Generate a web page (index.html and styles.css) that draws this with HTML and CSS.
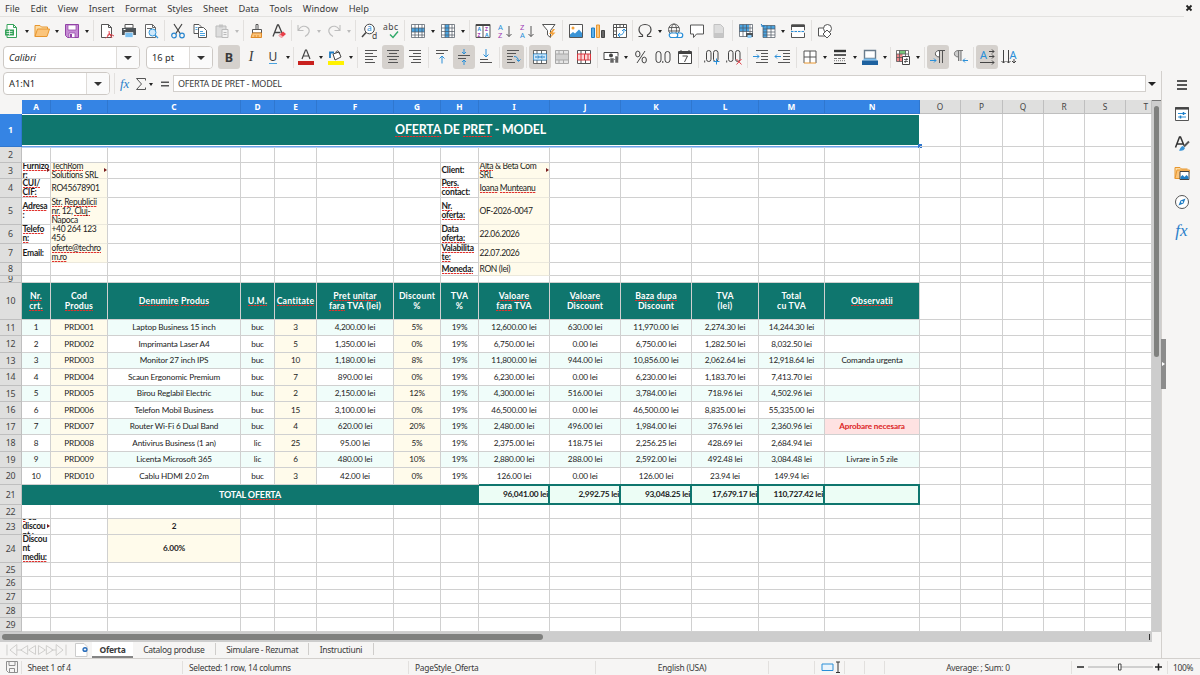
FILE: index.html
```html
<!DOCTYPE html>
<html lang="ro">
<head>
    <meta charset="UTF-8">
    <meta name="viewport" content="width=device-width, initial-scale=1.0">
    <title>Oferta de pret</title>
    <link rel="stylesheet" href="styles.css">
</head>
<body>
    <div class="window">
        <div class="menubar">
            <span>File</span><span>Edit</span><span>View</span><span>Insert</span><span>Format</span><span>Styles</span><span>Sheet</span><span>Data</span><span>Tools</span><span>Window</span><span>Help</span>
            <svg class="close" viewBox="0 0 8 8"><path d="M1.5 1.5l5 5M6.5 1.5l-5 5" stroke="#222" stroke-width="1.8"/></svg>
        </div>

        <!-- Standard toolbar -->
        <div class="toolbar">
            <button class="btn"><svg viewBox="0 0 16 16"><path d="M3 1.5h6.5l3 3v10H3z" fill="#fff" stroke="#37a35b"/><path d="M9.5 1.5v3h3" stroke="#37a35b"/><path d="M1 6.5h9v6H1z" fill="#37a35b"/><path d="M2.5 8.5h6M2.5 10.5h6M5.5 7v5" stroke="#fff" stroke-width=".7"/></svg></button><i class="drop"></i>
            <button class="btn"><svg viewBox="0 0 16 16"><path d="M1 13.5v-11h5l1.500 1.500h6v2" fill="#fcdca4" stroke="#e8962e"/><path d="M1 13.500l2.500-7.500H15.500l-2.500 7.500z" fill="#fbc57c" stroke="#e8962e"/></svg></button><i class="drop"></i>
            <button class="btn"><svg viewBox="0 0 16 16"><path d="M1.500 1.500h13v13h-11l-2-2z" fill="#c58ad3" stroke="#9242a6"/><path d="M4 2h8v5H4zM5 10h6v4.500H5z" fill="#fff" stroke="#9242a6" stroke-width=".7"/><path d="M6 11h2v3H6z" fill="#9242a6"/></svg></button><i class="drop"></i>
            <i class="sep"></i>
            <button class="btn"><svg viewBox="0 0 16 16"><path d="M2.500 1.500h7l3 3v10h-10z" fill="#fff" stroke="#555"/><path d="M9.500 1.500v3h3" stroke="#555"/><path d="M6.500 15c4-2 4-4 3.500-7M8 12.500c2-1.500 4-1.500 7 .5M10 10l3 5" stroke="#e0424c"/></svg></button>
            <button class="btn"><svg viewBox="0 0 16 16"><path d="M4 1.500h8V5H4z" fill="#fff" stroke="#555"/><path d="M1 5h14v7H1z" fill="#4d5357"/><path d="M4 9.500h8v5H4z" fill="#7cc0f0" stroke="#fff" stroke-width=".6"/><path d="M2.500 6.500h2" stroke="#fff"/></svg></button>
            <button class="btn"><svg viewBox="0 0 16 16"><path d="M2.500 1.500h7l3 3v10h-10z" fill="#fff" stroke="#666"/><path d="M9.500 1.500v3h3M4 5.500h5" stroke="#666"/><circle cx="9.500" cy="9.500" r="3.500" fill="#cfe8fa" stroke="#3598dc"/><path d="M12 12l3 3" stroke="#3598dc" stroke-width="1.300"/></svg></button>
            <i class="sep"></i>
            <button class="btn"><svg viewBox="0 0 16 16"><path d="M4 1l6.500 10M12 1L5.500 11" stroke="#444" stroke-width="1.200"/><circle cx="4" cy="12.500" r="2.300" stroke="#2a86cf" stroke-width="1.200"/><circle cx="12" cy="12.500" r="2.300" stroke="#2a86cf" stroke-width="1.200"/></svg></button>
            <button class="btn"><svg viewBox="0 0 16 16"><path d="M2 1.500h5l2 2v7H2z" fill="#fff" stroke="#555"/><path d="M6.500 4.500h5l3 3v7h-8z" fill="#fff" stroke="#555"/><path d="M8 8.500h3M8 10.500h5M8 12.500h5M3.500 4.500h2M3.500 6.500h2" stroke="#4aa3df"/></svg></button>
            <button class="btn"><svg viewBox="0 0 16 16"><path d="M2 3h10v11H2z" fill="#ddd" stroke="#bbb"/><path d="M5 1.500h4v3H5z" fill="#c4c4c4"/><path d="M8 6.500h6v8H8z" fill="#f2f2f2" stroke="#bbb"/><path d="M9.500 9.500h3M9.500 11.500h3" stroke="#bbb"/></svg></button><i class="drop off"></i>
            <i class="sep"></i>
            <button class="btn"><svg viewBox="0 0 16 16"><path d="M7 1.500h2v5H7zM3.500 6.500h9V10h-9z" fill="#fff" stroke="#555"/><path d="M3.500 10h9v4.500H2z" fill="#fbc57c" stroke="#e08a28"/><path d="M6 12v2M9 12v2" stroke="#e08a28"/></svg></button>
            <button class="btn"><svg viewBox="0 0 16 16"><path d="M2 13.500L6.500 2h1L11 10M3.500 9.500h6" stroke="#444" stroke-width="1.300"/><path d="M7.500 12.500l4.500-4 3 2.500-4.500 4z" fill="#e8404a"/><path d="M7.500 12.500l1.500-1.300 3 2.600-1.500 1.200z" fill="#f6b3b7"/></svg></button>
            <i class="sep narrow"></i>
            <button class="btn"><svg viewBox="0 0 16 16"><path d="M2 2v5.500h5.500M2.500 7C5 2.500 9 2.500 11.500 4.500c3 2.500 2 6.500-2.500 9" stroke="#bdbdbd" stroke-width="1.100"/></svg></button><i class="drop off"></i>
            <button class="btn"><svg viewBox="0 0 16 16"><path d="M14 2v5.500H8.500M13.500 7C11 2.500 7 2.500 4.500 4.500c-3 2.500-2 6.500 2.500 9" stroke="#bdbdbd" stroke-width="1.100"/></svg></button><i class="drop off"></i>
            <i class="sep"></i>
            <button class="btn"><svg viewBox="0 0 16 16"><circle cx="8.500" cy="6" r="4.800" fill="#fff" stroke="#444"/><path d="M5 9.500L1 14" stroke="#444" stroke-width="1.500"/><text x="6" y="8.300" class="ico-t blue">a</text><text x="11" y="15.500" class="ico-t">d</text></svg></button>
            <button class="btn"><svg viewBox="0 0 16 16"><text x="0" y="7" class="ico-t" textLength="15">abc</text><path d="M7 11.500l3 3 5-6" stroke="#2fa868" stroke-width="1.400"/></svg></button>
            <i class="sep"></i>
            <button class="btn"><svg viewBox="0 0 16 16"><path d="M1.500 1.500h13v13h-13z" fill="#fff"/><path d="M1.500 5h13v4h-13z" fill="#4aa3df"/><path d="M1.500 1.500h13v13h-13zM1.500 5h13M1.500 9h13M1.500 12h13M5 1.500v13M8.500 1.500v13M12 1.500v13" stroke="#4b5560" stroke-width=".7"/></svg></button><i class="drop"></i>
            <button class="btn"><svg viewBox="0 0 16 16"><path d="M1.500 1.500h13v13h-13z" fill="#fff"/><path d="M5 1.500h4v13H5z" fill="#4aa3df"/><path d="M1.500 1.500h13v13h-13zM1.500 5h13M1.500 8.500h13M1.500 12h13M5 1.500v13M9 1.500v13M12 1.500v13" stroke="#4b5560" stroke-width=".7"/></svg></button><i class="drop"></i>
            <i class="sep"></i>
            <button class="btn"><svg viewBox="0 0 16 16"><path d="M1 1.500h14v13H1zM8 2v12" fill="#fff" stroke="#555"/><path d="M1 1.500h14v1.500H1z" fill="#444"/><text x="2.500" y="8" class="ico-s blue">A</text><text x="10" y="8" class="ico-s pur">Z</text><text x="2.500" y="13.700" class="ico-s pur">Z</text><text x="10" y="13.700" class="ico-s blue">A</text></svg></button>
            <button class="btn"><svg viewBox="0 0 16 16"><text x="1" y="6.500" class="ico-m blue">A</text><text x="1" y="15" class="ico-m pur">Z</text><path d="M12 3v10.500M9.500 11l2.500 2.500 2.500-2.500" stroke="#555"/></svg></button>
            <button class="btn"><svg viewBox="0 0 16 16"><text x="1" y="6.500" class="ico-m pur">Z</text><text x="1" y="15" class="ico-m blue">A</text><path d="M12 3v10.500M9.500 11l2.500 2.500 2.500-2.500" stroke="#555"/></svg></button>
            <button class="btn"><svg viewBox="0 0 16 16"><path d="M1.500 1.500h12.500L9.500 7.500v7l-3-2.500V7.500z" fill="#fff" stroke="#555"/><path d="M12 6l-4 5h3l-2 4 5.500-5.500h-3L14 6z" fill="#f3a13a"/></svg></button>
            <i class="sep"></i>
            <button class="btn"><svg viewBox="0 0 16 16"><path d="M1.500 1.500h13v13h-13z" fill="#fff" stroke="#555"/><circle cx="5" cy="5" r="1.500" fill="#f3a13a"/><path d="M2 14v-2.500l3-2.500 2 1.500 4-4 3 3.500v4z" fill="#3a94d6"/></svg></button>
            <button class="btn"><svg viewBox="0 0 16 16"><path d="M1.500 5h3v9.500h-3z" fill="#5cb0ea" stroke="#1f7dc4"/><path d="M6.500 2h3v12.500h-3z" fill="#fbc57c" stroke="#e8962e"/><path d="M11.500 7.500h3v7h-3z" fill="#666" stroke="#444"/></svg></button>
            <button class="btn"><svg viewBox="0 0 16 16"><path d="M1.500 1.500h13v13h-13z" fill="#fff" stroke="#555"/><path d="M1.500 4.500h13M4.500 1.500v13M8 1.500v3M11.500 1.500v3M1.500 8h3M1.500 11.500h3" stroke="#555"/><path d="M7 12c4 0 5-2 5-5.500M6 12l2-2M6 12l2 2M12 6l-2 2M12 6l2 2" stroke="#2a8fd8"/></svg></button>
            <i class="sep narrow"></i>
            <button class="btn"><svg viewBox="0 0 16 16"><path d="M1.500 13.500h4V12C3 10.500 2 8.500 2 6.500 2 3.500 4.500 1.500 8 1.500s6 2 6 5c0 2-1 4-3.500 5.500v1.500h4" stroke="#444" stroke-width="1.200"/></svg></button><i class="drop"></i>
            <button class="btn"><svg viewBox="0 0 16 16"><circle cx="7" cy="6.500" r="5.500" stroke="#555" stroke-width=".9"/><ellipse cx="7" cy="6.500" rx="2.500" ry="5.500" stroke="#555" stroke-width=".9"/><path d="M2 4.500h10M1.500 8h11" stroke="#555" stroke-width=".9"/><path d="M4.500 10h4a2 2 0 010 4.500h-4a2 2 0 010-4.500zM10.500 10h3a2 2 0 010 4.500h-3" fill="#fff" stroke="#2a8fd8" stroke-width="1.200"/></svg></button>
            <button class="btn"><svg viewBox="0 0 16 16"><path d="M1.500 2h13v9H7.500L4.500 14.500V11h-3z" fill="#fff" stroke="#555"/></svg></button>
            <button class="btn"><svg viewBox="0 0 16 16"><path d="M3 1.500h6.500l3 3v10H3z" fill="#ddd" stroke="#c2c2c2"/><path d="M3 10h9.500v4H3z" fill="#c6c6c6"/></svg></button>
            <i class="sep"></i>
            <button class="btn"><svg viewBox="0 0 16 16"><path d="M1.500 1.500h13v12h-13z" fill="#fff"/><path d="M1.500 1.500H11v7H1.500z" fill="#4aa3df"/><path d="M1.500 1.500h13v12h-13zM1.500 5h13M1.500 8.500h13M5 1.500v12M8.500 1.500v12M12 1.500v12" stroke="#4b5560" stroke-width=".7"/><path d="M8 10h7v4H8z" fill="#4d5357"/><path d="M9.500 12h4v3h-4z" fill="#8ecbf5"/></svg></button>
            <button class="btn"><svg viewBox="0 0 16 16"><path d="M3 2.500h12v12H3z" fill="#fff"/><path d="M3 2.500h12v3.500H3zM3 2.500h4v12H3z" fill="#4aa3df"/><path d="M3 2.500h12v12H3zM3 6h12M3 9h12M3 12h12M7 2.500v12M11 2.500v12" stroke="#4b5560" stroke-width=".7"/><path d="M1 1l2.500 3M1 3h4" stroke="#1f7dc4"/></svg></button><i class="drop"></i>
            <button class="btn"><svg viewBox="0 0 16 16"><path d="M1.500 2h13v12.500h-13z" fill="#fff" stroke="#555"/><path d="M1.500 1.500h13V4h-13z" fill="#4b4b4b"/><path d="M0 8.500h16" stroke="#f6f5f4" stroke-width="2.500"/><path d="M1 8.500h14" stroke="#2a8fd8" stroke-dasharray="2.500 1"/></svg></button>
            <i class="sep"></i>
            <button class="btn"><svg viewBox="0 0 16 16"><path d="M1.500 5h7v8h-7z" fill="#fff" stroke="#555"/><circle cx="10.500" cy="5.500" r="4" fill="#fff" stroke="#555"/><path d="M10 7l4 4-4 4-4-4z" fill="#fff" stroke="#555"/></svg></button>
        </div>

        <!-- Formatting toolbar -->
        <div class="toolbar format">
            <div class="combo font-name"><span>Calibri</span><b></b></div>
            <div class="combo font-size"><span>16 pt</span><b></b></div>
            <button class="btn on letter"><strong>B</strong></button>
            <button class="btn letter"><em>I</em></button>
            <button class="btn letter"><u>U</u></button><i class="drop"></i>
            <i class="sep narrow"></i>
            <button class="btn"><svg viewBox="0 0 16 16"><path d="M4 10L7.500 1h1L12 10M5.300 7h5.400" stroke="#444" stroke-width="1.200"/><path d="M0 12h16v4H0z" fill="#c9211e"/></svg></button><i class="drop"></i>
            <button class="btn"><svg viewBox="0 0 16 16"><path d="M5 5l6-2 2 5-6 3z" fill="#fff" stroke="#444"/><path d="M8 4c0-3 3-3 3.500 1" stroke="#444"/><path d="M2 9V3.500h4" stroke="#1f7dc4" stroke-width="1.800"/><path d="M0 12h16v4H0z" fill="#fff200"/></svg></button><i class="drop"></i>
            <i class="sep"></i>
            <button class="btn"><svg viewBox="0 0 16 16"><path d="M2 1.500h12M2 4.500h8M2 7.500h12M2 10.500h8M2 13.500h10" stroke="#555"/></svg></button>
            <button class="btn on"><svg viewBox="0 0 16 16"><path d="M2 1.500h12M4 4.500h8M2 7.500h12M4 10.500h8M3 13.500h10" stroke="#555"/></svg></button>
            <button class="btn"><svg viewBox="0 0 16 16"><path d="M2 1.500h12M6 4.500h8M2 7.500h12M6 10.500h8M4 13.500h10" stroke="#555"/></svg></button>
            <i class="sep"></i>
            <button class="btn"><svg viewBox="0 0 16 16"><path d="M2 1.500h12M2 4.500h8" stroke="#555"/><path d="M8 14.500V7M5.500 9.500L8 7l2.500 2.500" stroke="#2a8fd8"/></svg></button>
            <button class="btn on"><svg viewBox="0 0 16 16"><path d="M2 6.500h12M2 9.500h8" stroke="#555"/><path d="M8 0v5M6 3l2 2 2-2M8 16v-5M6 13l2-2 2 2" stroke="#2a8fd8"/></svg></button>
            <button class="btn"><svg viewBox="0 0 16 16"><path d="M2 10.500h8M2 13.500h12" stroke="#555"/><path d="M8 0v8M5.500 5.500L8 8l2.500-2.500" stroke="#2a8fd8"/></svg></button>
            <i class="sep"></i>
            <button class="btn on"><svg viewBox="0 0 16 16"><path d="M2 1.500h12M2 4.500h9M2 7.500h6M2 10.500h5M2 13.500h8" stroke="#555"/><path d="M9 7.500c3 0 4 1.500 4.500 4.500M11.500 10.500l2 2 2-2" stroke="#2a8fd8"/></svg></button>
            <i class="sep"></i>
            <button class="btn on"><svg viewBox="0 0 16 16"><path d="M1.500 1.500h13v13h-13z" fill="#fff"/><path d="M1.500 1.500h13v13h-13zM1.500 5h13M1.500 11h13M5 1.500V5M9.500 1.500V5M5 11v3.500M9.500 11v3.500" stroke="#444" stroke-width=".8"/><path d="M1.500 5h13v6h-13z" fill="#cfe8fa" stroke="#2a8fd8" stroke-width=".7"/><path d="M3 8h4M9 8h4M6 6.500L7.500 8 6 9.500M10 6.500L8.500 8 10 9.500" stroke="#1f7dc4"/></svg></button>
            <button class="btn"><svg viewBox="0 0 16 16"><path d="M1.500 1.500h13v13h-13z" fill="#e6e6e6"/><path d="M1.500 5h13v6h-13z" fill="#d0d0d0"/><path d="M1.500 1.500h13v13h-13zM1.500 5h13M1.500 11h13M5 1.500V5M9.500 1.500V5M5 11v3.500M9.500 11v3.500" stroke="#a8a8a8"/></svg></button>
            <button class="btn"><svg viewBox="0 0 16 16"><path d="M1.500 1.500h13v13h-13z" fill="#fff"/><path d="M1.500 1.500h13v13h-13zM5 1.500V5M9.500 1.500V5M5 11v3.500M9.500 11v3.500" stroke="#555"/><path d="M1.500 5h13v6h-13zM5 5v6M8.500 5v6M12 5v6" fill="#fbd5d6" stroke="#d9363e"/></svg></button>
            <i class="sep"></i>
            <button class="btn"><svg viewBox="0 0 16 16"><path d="M1 3.500h14v7H1z" fill="#fff" stroke="#444"/><circle cx="8" cy="6.500" r="2" fill="#444"/><path d="M7 9h4v5H7zM12 7h3.500v7H12z" fill="#666" stroke="#fff" stroke-width=".5"/></svg></button><i class="drop"></i>
            <button class="btn"><svg viewBox="0 0 16 16"><ellipse cx="4.800" cy="5" rx="2.200" ry="2.900" stroke="#444"/><ellipse cx="11.200" cy="11" rx="2.200" ry="2.900" stroke="#444"/><path d="M12 2L4 14" stroke="#444"/></svg></button>
            <button class="btn"><svg viewBox="0 0 16 16"><rect x="1" y="2.500" width="5" height="11" rx="2.500" stroke="#444"/><rect x="10" y="2.500" width="5" height="11" rx="2.500" stroke="#444"/><path d="M7.800 12v2" stroke="#444"/></svg></button>
            <button class="btn"><svg viewBox="0 0 16 16"><path d="M1.500 2.500h13v12h-13z" fill="#fff" stroke="#444"/><path d="M2 4h12" stroke="#444" stroke-width="2"/><path d="M4 1v2M12 1v2M5.500 7h5l-3 6" stroke="#444"/></svg></button>
            <i class="sep"></i>
            <button class="btn"><svg viewBox="0 0 16 16"><rect x="2.500" y="1.500" width="4.500" height="11" rx="2.200" stroke="#444"/><rect x="9.500" y="1.500" width="4.500" height="11" rx="2.200" stroke="#444"/><path d="M.7 11.500v2" stroke="#444"/><path d="M12.500 9.500v6M9.500 12.500h6" stroke="#2a8fd8"/></svg></button>
            <button class="btn"><svg viewBox="0 0 16 16"><rect x="2.500" y="1.500" width="4.500" height="11" rx="2.200" stroke="#444"/><rect x="9.500" y="1.500" width="4.500" height="11" rx="2.200" stroke="#444"/><path d="M.7 11.500v2" stroke="#444"/><path d="M10.500 10l5 5.500M15.500 10l-5 5.500" stroke="#e0424c"/></svg></button>
            <i class="sep"></i>
            <button class="btn"><svg viewBox="0 0 16 16"><path d="M3 1.500h12M8 4.500h7M8 7.500h7M8 10.500h7M3 13.500h12" stroke="#555"/><path d="M0 7.500h6M4 5.500l2 2-2 2" stroke="#2a8fd8"/></svg></button>
            <button class="btn"><svg viewBox="0 0 16 16"><path d="M3 1.500h12M8 4.500h7M8 7.500h7M8 10.500h7M3 13.500h12" stroke="#555"/><path d="M0 7.500h6M2 5.500l-2 2 2 2" stroke="#2a8fd8"/></svg></button>
            <i class="sep"></i>
            <button class="btn"><svg viewBox="0 0 16 16"><path d="M2 2h12v12H2z" fill="#fff"/><path d="M2 14V2h12v12M8 2v12M2 8h12" stroke="#555"/><path d="M2 14h12" stroke="#e8962e"/></svg></button><i class="drop"></i>
            <button class="btn"><svg viewBox="0 0 16 16"><path d="M2 2h12" stroke="#333" stroke-width="2.400"/><path d="M2 6h12" stroke="#333" stroke-width="1.600"/><path d="M2 9.500h12" stroke="#777" stroke-dasharray="3 1"/><path d="M2 11.700h12" stroke="#777" stroke-dasharray="1 1"/><path d="M2 14.500h12" stroke="#333"/></svg></button><i class="drop"></i>
            <button class="btn"><svg viewBox="0 0 16 16"><path d="M2.500 1.500h11v8h-11z" fill="#fff" stroke="#6a7c8c" stroke-width="1.400"/><path d="M2.500 9.500l-2 2h15l-2-2" fill="#7cc0f0"/><path d="M0 11.500h16V16H0z" fill="#1e62a0"/></svg></button><i class="drop"></i>
            <i class="sep narrow"></i>
            <button class="btn"><svg viewBox="0 0 16 16"><path d="M1.500 1.500h12v11h-12z" fill="#fff"/><path d="M4.500 1.500h6V5h-6z" fill="#7ac77c"/><path d="M1.500 5h6v7.500h-6z" fill="#f0868a"/><path d="M1.500 1.500h12v11h-12zM1.500 5h12M1.500 8.500h12M4.500 1.500v11M10.500 1.500v11" stroke="#555" stroke-width=".8"/><path d="M7.500 7.500h7v8h-7z" fill="#fff" stroke="#444"/><path d="M9 10.500h4M9 12.500h4M12 9l-2 5" stroke="#444" stroke-width=".8"/></svg></button><i class="drop"></i>
            <i class="sep"></i>
            <button class="btn on"><svg viewBox="0 0 16 16"><path d="M9.500 14V1.500M8 1.500h7M12.500 1.500V14" stroke="#555"/><path d="M9.500 8C4 8 4 1.500 9.500 1.500z" fill="#fff" stroke="#555"/><path d="M0 11.500h6M4 9.500l2 2-2 2" stroke="#2a8fd8"/></svg></button>
            <button class="btn"><svg viewBox="0 0 16 16"><path d="M6 1.500h3V12H6z" fill="#ccc"/><path d="M6.500 12V1.500M6 1.500h5M9 1.500V12" stroke="#777"/><path d="M6.500 8C1 8 1 1.500 6.500 1.500z" fill="#ccc" stroke="#777"/><path d="M16 11.500h-5M13 9.500l-2 2 2 2" stroke="#2a8fd8"/></svg></button>
            <i class="sep"></i>
            <button class="btn on"><svg viewBox="0 0 16 16"><text x="1" y="9.500" class="ico-l blue">A</text><path d="M10 2.500h5M10 7.500h5M1 13.500h14M13 .5l2 2-2 2M13 5.500l2 2-2 2M13 11.500l2 2-2 2" stroke="#444"/></svg></button>
            <button class="btn"><svg viewBox="0 0 16 16"><text x="8.500" y="9.500" class="ico-l blue">A</text><path d="M2.500 1v13M7.500 1v13M13 10v4M.5 12l2 2 2-2M5.500 12l2 2 2-2M11 12l2 2 2-2" stroke="#444"/></svg></button>
        </div>

        <div class="main">
            <div class="work">
                <div class="formula-bar">
                    <div class="combo name-box"><span>A1:N1</span><b></b></div>
                    <i class="sep"></i>
                    <span class="fx">fx</span>
                    <svg class="sigma" viewBox="0 0 12 14"><path d="M10.500 3.500v-2h-9L6.500 7l-5 5.500h9v-2" stroke="#555"/></svg><i class="drop"></i>
                    <svg class="equals" viewBox="0 0 10 10"><path d="M1 3.200h8M1 6.800h8" stroke="#555" stroke-width="1.500"/></svg>
                    <div class="formula-input">OFERTA DE PRET - MODEL</div>
                    <i class="expand"></i>
                </div>

                <div class="sheet-area">
                    <div class="sheet" id="sheet"></div>
                    <div class="vscroll"><i></i></div>
                </div>
                <div class="hscroll"><i></i><b></b></div>

                <div class="tabs">
                    <svg class="tab-nav" viewBox="0 0 62 12"><path d="M1 .5v11M11 .5L4 6l7 5.500zM11 6h5M22 1.500L15 6l7 4.500zM30 1.500L23 6l7 4.500zM33 1.500L40 6l-7 4.500zM41 1.500L48 6l-7 4.500zM46 6h5M51 .5L58 6l-7 5.500zM61 .5v11" stroke="#cfcecc"/></svg>
                    <svg class="tab-add" viewBox="0 0 14 14"><path d="M.5.500h8.500l3 3v10H.5z" fill="#fff" stroke="#ccc"/><circle cx="10" cy="6.500" r="2.600" fill="#2a6ebb"/><path d="M10 5.300v2.400M8.800 6.500h2.400" stroke="#fff" stroke-width=".9"/></svg>
                    <span class="tab active">Oferta</span>
                    <span class="tab">Catalog produse</span>
                    <span class="tab">Simulare - Rezumat</span>
                    <span class="tab">Instructiuni</span>
                </div>
            </div>

            <div class="sidebar">
                <svg viewBox="0 0 16 16"><path d="M3 4h10M3 8h10M3 12h10" stroke="#222" stroke-width="1.500"/></svg>
                <svg viewBox="0 0 16 16"><path d="M1.500 1.500h13v13h-13z" fill="#fff" stroke="#555"/><path d="M1 2.500h14" stroke="#444" stroke-width="2.200"/><path d="M4 7.500h8M4 11h8" stroke="#2a8fd8"/><path d="M9.500 6v3M6.500 9.500v3" stroke="#1f7dc4" stroke-width="1.500"/></svg>
                <svg viewBox="0 0 16 16"><path d="M1.500 11.500L5.500 1h1L10 9.500M3 8h6" stroke="#333" stroke-width="1.500"/><path d="M15 5.500l-5 5" stroke="#555" stroke-width="2"/><path d="M5 14.500c1-1 1.500-4 4-4.500l2 2c-1 3-4 3-6 2.500z" fill="#3a94d6"/></svg>
                <svg viewBox="0 0 16 16"><path d="M1 13.500v-11h5l1.500 1.500h6" fill="#fcdca4" stroke="#e8962e"/><path d="M1 13.500l2-8.500h12.500l-2 8.500z" fill="#fbc57c" stroke="#e8962e"/><path d="M6 6.500h9v8H6z" fill="#fff" stroke="#444"/><path d="M6.500 14v-2l2-2 2 2 2-2 2 2v2z" fill="#1f7dc4"/></svg>
                <svg viewBox="0 0 16 16"><circle cx="8" cy="8" r="6.500" fill="#fff" stroke="#555"/><path d="M11.500 4.500L9.500 9.500l-5 2 2-5z" fill="#1f7dc4"/><circle cx="8" cy="8" r="1" fill="#fff"/></svg>
                <span class="fx">fx</span>
                <i class="grip"></i>
            </div>
        </div>

        <div class="statusbar">
            <span class="st-save"><svg viewBox="0 0 12 12"><path d="M.5.500h11v11h-9l-2-2zM3 .5v4h6v-4M3.500 11.500v-4h5v4" stroke="#8e8e8e"/></svg></span>
            <span class="st-sheet">Sheet 1 of 4</span>
            <span class="st-sel">Selected: 1 row, 14 columns</span>
            <span class="st-style">PageStyle_Oferta</span>
            <span class="st-lang">English (USA)</span>
            <span class="st-ins"></span>
            <span class="st-mode"><svg viewBox="0 0 24 12"><path d="M1 3h11v6.500H1z" fill="#eaf4fc" stroke="#2a8fd8"/><path d="M15 1h4M17 1v10.500M15 11.500h4" stroke="#333"/></svg></span>
            <span class="st-gap"></span>
            <span class="st-gap"></span>
            <span class="st-sum">Average: ; Sum: 0</span>
            <span class="st-zoom"><svg viewBox="0 0 90 12"><path d="M4 6h7M82 6h7M85.500 2.500v7" stroke="#222" stroke-width="1.500"/><path d="M15 6h65" stroke="#aaa"/><path d="M45.500 3H48v6h-2.500z" fill="#fff" stroke="#444"/></svg></span>
            <span class="st-pct">100%</span>
        </div>
    </div>

    <script src="script.js"></script>
</body>
</html>
```
FILE: styles.css
```css
* {
    margin: 0;
    padding: 0;
    box-sizing: border-box;
}

body {
    width: 1200px;
    height: 675px;
    overflow: hidden;
    font-family: 'Noto Sans', sans-serif;
    font-size: 9px;
    color: #3a3a3a;
    background: #f6f5f4;
}

svg {
    fill: none;
    display: block;
    overflow: visible;
}

.window {
    width: 1200px;
    height: 675px;
    display: flex;
    flex-direction: column;
}

.menubar {
    height: 17px;
    margin-right: 16px;
    padding-left: 5px;
    display: flex;
    align-items: center;
    gap: 10.6px;
    border-bottom: 1px solid #e3e2e0;
    font-size: 9.3px;
    white-space: nowrap;
    flex: none;
}

.menubar .close {
    width: 8px;
    height: 8px;
    margin-left: auto;
    margin-right: -9px;
}

/* toolbars */
.toolbar {
    height: 27px;
    padding: 0 0 0 1px;
    display: flex;
    align-items: center;
    flex: none;
}

.toolbar.format {
    padding-left: 3px;
    padding-bottom: 1px;
}

.btn {
    width: 22px;
    height: 24px;
    flex: none;
    display: flex;
    align-items: center;
    justify-content: center;
    border: none;
    border-radius: 3px;
    background: none;
    color: #3a3a3a;
    font-family: 'Noto Sans', sans-serif;
}

.btn svg {
    width: 16px;
    height: 16px;
}

.btn.on {
    background: #d5d1cd;
}

.letter {
    font-size: 12.5px;
}

.letter em {
    font-family: 'Liberation Serif', serif;
    font-size: 14px;
}

.letter u {
    text-decoration: none;
    line-height: 13px;
    border-bottom: 1px solid #4aa3df;
    font-size: 12px;
}

.drop {
    width: 8px;
    flex: none;
    display: flex;
    justify-content: center;
}

.drop::after,
.combo b::after,
.expand::after {
    content: '';
    margin-top: 1px;
    border: 2.5px solid transparent;
    border-top: 3px solid #222;
    border-bottom: none;
}

.drop.off::after {
    border-top-color: #bbb;
}

.sep {
    width: 5px;
    height: 21px;
    flex: none;
    background: linear-gradient(#e2e0de, #e2e0de) center / 1px 100% no-repeat;
}

.sep.narrow {
    width: 3px;
}

.combo {
    height: 23px;
    display: flex;
    flex: none;
    align-items: center;
    border: 1px solid #cdc9c5;
    border-radius: 4px;
    background: #fff;
    font-size: 9.3px;
    color: #2a2a2a;
    overflow: hidden;
}

.combo span {
    flex: 1;
    padding-left: 5px;
}

.combo b {
    width: 23px;
    height: 100%;
    display: flex;
    align-items: center;
    justify-content: center;
    border-left: 1px solid #dedbd8;
    background: #fafafa;
}

.combo b::after {
    border-width: 4px 4px 0;
    border-top-color: #333;
}

.font-name {
    width: 137px;
    margin-right: 6px;
    font-style: italic;
}

.font-size {
    width: 67px;
    margin-right: 5px;
}

.ico-t { font: 8.5px/1 'Noto Sans', sans-serif; fill: #444; }
.ico-s { font: bold 5px/1 'Noto Sans', sans-serif; }
.ico-m { font: 7.6px/1 'Noto Sans', sans-serif; }
.ico-l { font: 11px/1 'Noto Sans', sans-serif; }
.ico-t.blue, .blue { fill: #2a8fd8; }
.pur { fill: #a03db5; }

/* main area */
.main {
    height: 587px;
    display: flex;
    flex: none;
}

.work {
    width: 1161px;
    display: flex;
    flex-direction: column;
}

.formula-bar {
    height: 29px;
    padding: 0 0 4px 3px;
    display: flex;
    align-items: center;
    flex: none;
}

.name-box {
    width: 107px;
    margin-right: 2px;
}

.fx {
    font: italic 13px 'Liberation Serif', serif;
    color: #2a7fca;
}

.formula-bar .fx {
    width: 18px;
    padding-left: 3px;
}

.sigma {
    width: 12px;
    height: 14px;
}

.equals {
    width: 10px;
    height: 10px;
    margin: 0 3px 0 5px;
}

.formula-input {
    width: 973px;
    height: 17px;
    padding-left: 4px;
    border: 1px solid #d3d0cd;
    background: #fff;
    font-size: 9px;
    line-height: 15px;
    letter-spacing: -0.23px;
}

.expand {
    width: 12px;
    display: flex;
    justify-content: center;
}

.expand::after {
    border-width: 4px 4px 0;
}

.sheet-area {
    height: 532px;
    display: flex;
    flex: none;
}

.sheet {
    width: 1152px;
    background: #fff;
    overflow: hidden;
}

.row {
    display: grid;
    grid-template-columns: 22px 29px 57px 133px 34px 42px 77px 47px 38px 71px 71px 71px 67px 66px 95px 41px 42px 41px 41px 41px 26px;
}

.head,
.num {
    display: flex;
    align-items: center;
    justify-content: center;
    background: #dfdfde;
    border-right: 1px solid #bfbfbf;
    border-bottom: 1px solid #bfbfbf;
    font-size: 8.3px;
    line-height: 10px;
    color: #444;
    overflow: hidden;
}

.num {
    font-size: 8.8px;
    letter-spacing: -0.2px;
}

.head.sel,
.num.sel {
    background: #3584e4;
    border-color: #2f77cf;
    color: #fff;
    font-weight: bold;
}

.corner {
    background: #f6f5f4;
}

.head:last-child {
    justify-content: flex-end;
    padding-right: 3px;
}

.cell {
    position: relative;
    display: flex;
    align-items: center;
    justify-content: center;
    min-height: 0;
    overflow: hidden;
    border-right: 1px solid #d0d0d0;
    border-bottom: 1px solid #d0d0d0;
    font-family: Lato, sans-serif;
    font-size: 8.2px;
    line-height: 9px;
    letter-spacing: -0.16px;
    text-align: center;
    white-space: nowrap;
    color: #1c1c1c;
}

.cell.left {
    justify-content: flex-start;
    text-align: left;
    padding-left: 0.5px;
    font-size: 8.5px;
    letter-spacing: -0.35px;
}

.cell.label {
    font-weight: bold;
    letter-spacing: -0.25px;
}

.cell.field {
    background: #fffbeb;
    border-bottom-color: #ebe8dc;
}

.cell.cream { background: #fffbeb; }
.cell.mint { background: #f0fdfa; }

.cell.title {
    grid-column: 2 / 16;
    margin-right: 1px;
    padding-bottom: 2px;
    background: #0f766e;
    border: solid #fff;
    border-width: 1px 0 1px 0;
    box-shadow: 0 1.500px #6b9fe6;
    margin-bottom: 1px;
    overflow: visible;
    font-size: 12.4px;
    font-weight: bold;
    color: #fff;
}

/* selection handle */
.cell.title::after {
    content: '';
    position: absolute;
    right: -3px;
    bottom: -3px;
    width: 4px;
    height: 4px;
    background: #2f77cf;
}

.cell.th {
    padding-bottom: 1px;
    background: #0f766e;
    color: #fff;
    font-weight: bold;
    font-size: 8.7px;
    line-height: 10px;
    letter-spacing: 0.2px;
}

.cell.alert {
    background: #fee2e2;
    color: #dc2626;
    font-weight: bold;
}

.cell.total-label {
    grid-column: 2 / 10;
    background: #0f766e;
    color: #fff;
    font-size: 9px;
    font-weight: bold;
    border-color: #0f766e;
}

.cell.total {
    justify-content: flex-end;
    background: #ecfdf5;
    border: solid #0f766e;
    border-width: 1px 2px 2px 0;
    box-shadow: 0 -1px #0f766e;
    overflow: visible;
    font-size: 8.4px;
    font-weight: bold;
    letter-spacing: -0.28px;
}

.cell.strong {
    font-weight: bold;
}

.cell.more::after {
    content: '';
    position: absolute;
    right: 0;
    top: 5px;
    border: 2.5px solid transparent;
    border-left: 3px solid #7a1f1f;
    border-right: none;
}

/* spelling marks */
.sp {
    background: repeating-linear-gradient(90deg, #e0322e 0 2px, rgba(224, 50, 46, 0.35) 2px 3px) 0 100% / 100% 1px no-repeat;
}

.vscroll {
    width: 9px;
    padding: 5px 2px 0;
    background: #cdcdcd;
    border-top: 1px solid #777;
}

.vscroll i {
    display: block;
    width: 5px;
    height: 251px;
    border-radius: 3px;
    background: #7f807e;
}

.hscroll {
    width: 1152px;
    height: 10px;
    padding: 2px;
    display: flex;
    justify-content: space-between;
    background: #cdcdcd;
    flex: none;
}

.hscroll i {
    width: 541px;
    height: 6px;
    border-radius: 3px;
    background: #7f807e;
}

.hscroll b {
    width: 1px;
    height: 6px;
    background: #333;
}

.tabs {
    height: 16px;
    padding-left: 6px;
    display: flex;
    align-items: stretch;
    flex: none;
    font-size: 8.5px;
    letter-spacing: -0.3px;
}

.tab-nav {
    width: 61px;
    height: 12px;
    margin: 2px 8px 0 0;
}

.tab-add {
    width: 14px;
    height: 14px;
    margin: 1px 3px 0 0;
}

.tab {
    display: flex;
    align-items: center;
    margin: 1px 0 3px;
    padding: 0 10.3px;
    border-right: 1px solid #cfcdcb;
    white-space: nowrap;
}

.tab.active {
    width: 41px;
    justify-content: center;
    margin: 0;
    padding: 0;
    background: #fff;
    border-right: none;
    border-bottom: 2px solid #858585;
    font-weight: bold;
}

.sidebar {
    width: 39px;
    position: relative;
    display: flex;
    flex-direction: column;
    align-items: center;
    gap: 13.3px;
    padding: 6px 0 0 1px;
    border-left: 1px solid #d3d0cd;
}

.sidebar svg {
    width: 16px;
    height: 16px;
    flex: none;
}

.sidebar .fx {
    font-size: 17px;
    line-height: 16px;
}

.grip {
    position: absolute;
    left: -1px;
    top: 268px;
    width: 5px;
    height: 50px;
    background: #8c8c8c;
}

.grip::after {
    content: '';
    position: absolute;
    left: 1px;
    top: 23px;
    border: 2px solid transparent;
    border-left: 3px solid #fff;
    border-right: none;
}

/* status bar */
.statusbar {
    height: 17px;
    display: flex;
    align-items: center;
    border-top: 1px solid #d3d0cd;
    font-size: 8.4px;
    letter-spacing: -0.25px;
    flex: none;
}

.statusbar span {
    height: 13px;
    line-height: 13px;
    padding-left: 6px;
    flex: none;
    border-right: 1px solid #e2e0de;
    white-space: nowrap;
}

.statusbar svg {
    height: 12px;
}

.statusbar .st-save { width: 22px; }
.statusbar .st-sheet { width: 161px; padding-left: 5.5px; }
.st-sel { width: 226px; }
.st-style { width: 187px; }
.statusbar .st-lang { width: 173px; padding: 0; text-align: center; }
.st-ins { width: 46px; }
.st-mode { width: 30px; }
.st-gap { width: 20px; }
.statusbar .st-sum { width: 187px; padding: 0; text-align: center; }
.statusbar .st-zoom { width: 96px; padding: 0 0 0 1px; }
.statusbar .st-pct { border: none; padding-left: 5px; }
```
FILE: script.js
```js
const COLS = 'ABCDEFGHIJKLMNOPQRST'.split('');
const LAST_SELECTED = 13;

// row heights in px, rows 1..29
const heights = [33, 16, 16, 19, 27, 19, 19, 13, 7, 37, 16, 17, 16, 17, 16, 17, 16, 17, 16, 17, 20, 14, 16, 28, 14, 13, 14, 14, 14];

// cells[row][col] = [text, classes]; ~word~ marks a spelling error
const cells = {};

function set(row, col, text, cls) {
    cells[row] = cells[row] || {};
    cells[row][col] = [text, cls || ''];
}

set(3, 'A', '~Furnizo~|~r:~', 'left label more');
set(4, 'A', '~CUI/~|~CIF:~', 'left label');
set(5, 'A', '~Adresa~|:', 'left label');
set(6, 'A', '~Telefo~|~n:~', 'left label');
set(7, 'A', 'Email:', 'left label');

set(3, 'B', '~TechRom~|Solutions ~SRL~', 'left field more');
set(4, 'B', 'RO45678901', 'left field');
set(5, 'B', '~Str.~ ~Republicii~|~nr.~ 12, ~Cluj-~|~Napoca~', 'left field');
set(6, 'B', '+40 264 123|456', 'left field');
set(7, 'B', '~oferte@techro~|~m.ro~', 'left field');

set(3, 'H', 'Client:', 'left label');
set(4, 'H', '~Pers.~|contact:', 'left label');
set(5, 'H', '~Nr.~|~oferta:~', 'left label');
set(6, 'H', 'Data|~oferta:~', 'left label');
set(7, 'H', '~Valabilita~|~te:~', 'left label');
set(8, 'H', '~Moneda:~', 'left label');

set(3, 'I', '~Alta~ & Beta Com|~SRL~', 'left field more');
set(4, 'I', '~Ioana~ ~Munteanu~', 'left field');
set(5, 'I', 'OF-2026-0047', 'left field');
set(6, 'I', '22.06.2026', 'left field');
set(7, 'I', '22.07.2026', 'left field');
set(8, 'I', 'RON (lei)', 'left field');

const headers = [
    '~Nr.~|~crt.~', 'Cod|~Produs~', '~Denumire~ ~Produs~', '~U.M.~', '~Cantitate~',
    '~Pret~ ~unitar~|~fara~ TVA (lei)', 'Discount|%', 'TVA|%', '~Valoare~|~fara~ TVA',
    '~Valoare~|Discount', '~Baza~ ~dupa~|Discount', 'TVA|(lei)', 'Total|cu TVA', '~Observatii~'
];
headers.forEach((h, i) => set(10, COLS[i], h, 'th'));

const products = [
    ['Laptop Business 15 inch', 'buc', '3', '4,200.00', '5%', '12,600.00', '630.00', '11,970.00', '2,274.30', '14,244.30', ''],
    ['Imprimanta Laser A4', 'buc', '5', '1,350.00', '0%', '6,750.00', '0.00', '6,750.00', '1,282.50', '8,032.50', ''],
    ['Monitor 27 inch IPS', 'buc', '10', '1,180.00', '8%', '11,800.00', '944.00', '10,856.00', '2,062.64', '12,918.64', 'Comanda urgenta'],
    ['Scaun Ergonomic Premium', 'buc', '7', '890.00', '0%', '6,230.00', '0.00', '6,230.00', '1,183.70', '7,413.70', ''],
    ['Birou Reglabil Electric', 'buc', '2', '2,150.00', '12%', '4,300.00', '516.00', '3,784.00', '718.96', '4,502.96', ''],
    ['Telefon Mobil Business', 'buc', '15', '3,100.00', '0%', '46,500.00', '0.00', '46,500.00', '8,835.00', '55,335.00', ''],
    ['Router Wi-Fi 6 Dual Band', 'buc', '4', '620.00', '20%', '2,480.00', '496.00', '1,984.00', '376.96', '2,360.96', 'Aprobare necesara'],
    ['Antivirus Business (1 an)', 'lic', '25', '95.00', '5%', '2,375.00', '118.75', '2,256.25', '428.69', '2,684.94', ''],
    ['Licenta Microsoft 365', 'lic', '6', '480.00', '10%', '2,880.00', '288.00', '2,592.00', '492.48', '3,084.48', 'Livrare in 5 zile'],
    ['Cablu HDMI 2.0 2m', 'buc', '3', '42.00', '0%', '126.00', '0.00', '126.00', '23.94', '149.94', '']
];

products.forEach((p, i) => {
    const row = 11 + i;
    const band = i % 2 === 0 ? 'mint' : '';
    const lei = v => v + ' lei';
    set(row, 'A', String(i + 1), band);
    set(row, 'B', 'PRD' + String(i + 1).padStart(3, '0'), 'cream');
    set(row, 'C', p[0], band);
    set(row, 'D', p[1], band);
    set(row, 'E', p[2], 'cream');
    set(row, 'F', lei(p[3]), band);
    set(row, 'G', p[4], 'cream');
    set(row, 'H', '19%', band);
    set(row, 'I', lei(p[5]), band);
    set(row, 'J', lei(p[6]), band);
    set(row, 'K', lei(p[7]), band);
    set(row, 'L', lei(p[8]), band);
    set(row, 'M', lei(p[9]), band);
    set(row, 'N', p[10], p[10].startsWith('Aprobare') ? 'alert' : band);
});

['96,041.00 lei', '2,992.75 lei', '93,048.25 lei', '17,679.17 lei', '110,727.42 lei', ''].forEach((t, i) => {
    set(21, COLS[8 + i], t, 'total');
});

set(23, 'A', '~s~ cu|discou|nt :', 'left label more');
set(23, 'C', '2', 'cream strong');
set(24, 'A', 'Discou|nt|~mediu:~', 'left label');
set(24, 'C', '6.00%', 'cream strong');

function render(text) {
    return '<span>' + text.replace('&', '&amp;')
        .replace(/~([^~]+)~/g, '<span class="sp">$1</span>')
        .replace(/\|/g, '<br>') + '</span>';
}

let html = '<div class="row" style="height:14px"><div class="corner"></div>';
COLS.forEach((c, i) => {
    html += `<div class="head${i <= LAST_SELECTED ? ' sel' : ''}">${c}</div>`;
});
html += '</div>';

heights.forEach((h, i) => {
    const row = i + 1;
    html += `<div class="row" style="height:${h}px"><div class="num${row === 1 ? ' sel' : ''}">${row}</div>`;
    let start = 0;
    if (row === 1) {
        html += `<div class="cell title">${render('~OFERTA~ DE ~PRET~ - MODEL')}</div>`;
        start = 14;
    } else if (row === 21) {
        html += `<div class="cell total-label">${render('TOTAL ~OFERTA~')}</div>`;
        start = 8;
    }
    for (let c = start; c < COLS.length; c++) {
        const cell = (cells[row] || {})[COLS[c]];
        html += cell ? `<div class="cell ${cell[1]}">${render(cell[0])}</div>` : '<div class="cell"></div>';
    }
    html += '</div>';
});

document.getElementById('sheet').innerHTML = html;
```
